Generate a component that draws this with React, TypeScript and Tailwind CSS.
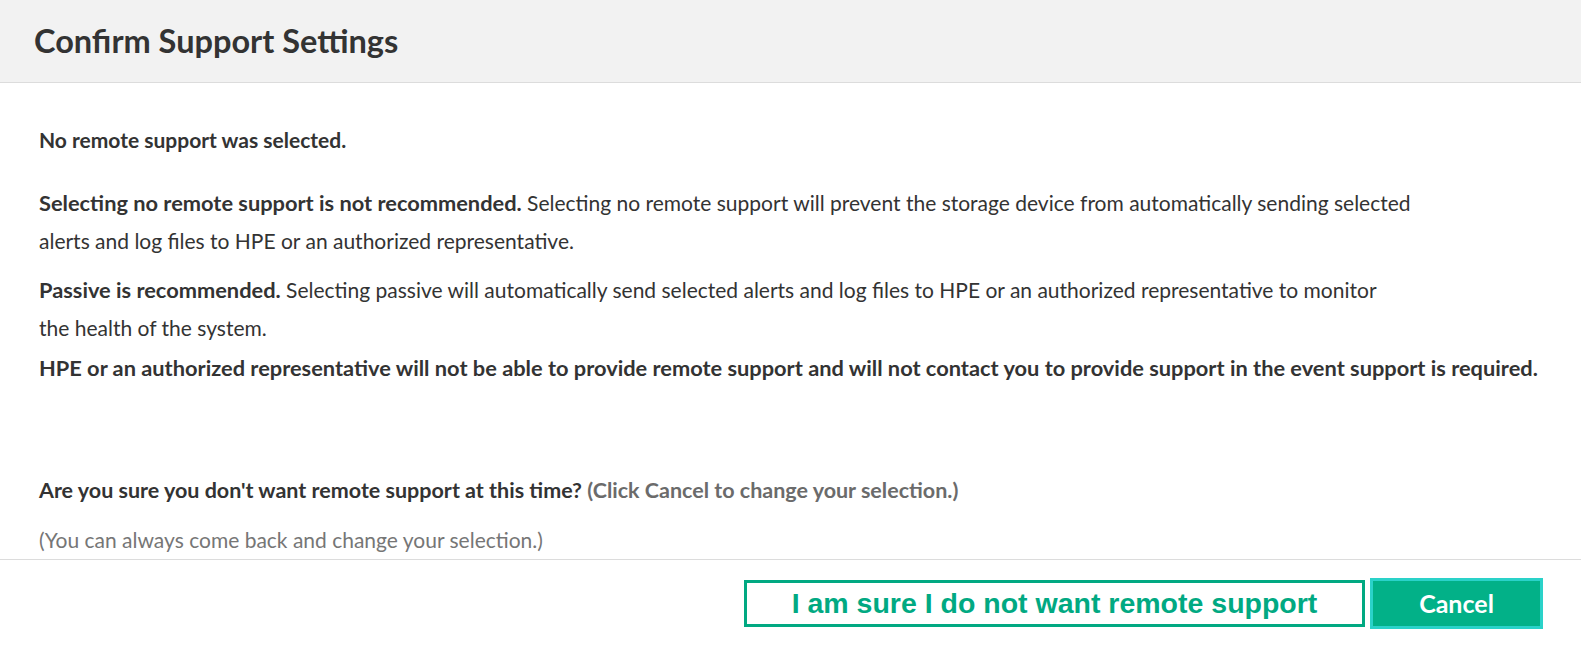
export default function App() {
  return (
    <div className="flex h-[646px] w-[1581px] flex-col overflow-hidden bg-white font-['Lato',sans-serif] text-[#333333]">
      {/* Header */}
      <div className="flex h-[83px] shrink-0 items-center border-b border-[#dcdcdc] bg-[#f2f2f2] px-[34px]">
        <h1 className="text-[32.5px] font-bold leading-none">Confirm Support Settings</h1>
      </div>

      {/* Body */}
      <div className="flex-1 pl-[39px] pr-[20px] pt-[38px] text-[21px] leading-[38px]">
        <p className="font-bold">No remote support was selected.</p>
        <p className="mt-[25px]">
          <span className="text-[21.8px] font-bold">Selecting no remote support is not recommended.</span> Selecting no
          remote support will prevent the storage device from automatically sending selected
          <br />
          alerts and log files to HPE or an authorized representative.
        </p>
        <p className="mt-[11px]">
          <span className="text-[21.8px] font-bold">Passive is recommended.</span> Selecting passive will automatically
          send selected alerts and log files to HPE or an authorized representative to monitor
          <br />
          the health of the system.
        </p>
        <p className="mt-[2px] whitespace-nowrap text-[21.8px] font-bold">
          HPE or an authorized representative will not be able to provide remote support and will not contact you to
          provide support in the event support is required.
        </p>
        <p className="mt-[84px] text-[21.5px] font-bold">
          Are you sure you don't want remote support at this time?{' '}
          <span className="text-[#6b6b6b]">(Click Cancel to change your selection.)</span>
        </p>
        <p className="mt-[12px] text-[#767676]">(You can always come back and change your selection.)</p>
      </div>

      {/* Footer */}
      <div className="flex h-[87px] shrink-0 items-start justify-end gap-[5px] border-t border-[#dcdcdc] pr-[38px] pt-[18px]">
        <button className="mt-[2px] flex h-[47px] w-[621px] items-center justify-center border-[3px] border-[#01a982] bg-white font-['Liberation_Sans',Arial,sans-serif] text-[28.5px] font-bold text-[#01a982]">
          I am sure I do not want remote support
        </button>
        <button className="flex h-[51px] w-[173px] items-center justify-center border-[3px] border-[#2ad2c9] bg-[#02b188] text-[25px] font-bold text-white">
          Cancel
        </button>
      </div>
    </div>
  );
}
